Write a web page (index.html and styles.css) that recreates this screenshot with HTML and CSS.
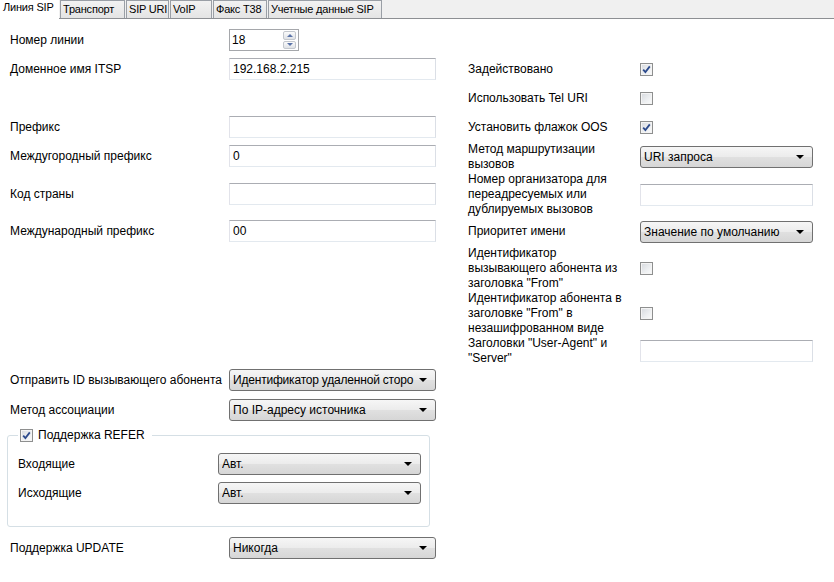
FILE: index.html
```html
<!DOCTYPE html>
<html lang="ru">
<head>
<meta charset="utf-8">
<title>Линия SIP</title>
<link rel="stylesheet" href="styles.css">
</head>
<body>
<div class="tabs">
  <div class="tab active">Линия SIP</div>
  <div class="tab t2">Транспорт</div>
  <div class="tab t3">SIP URI</div>
  <div class="tab t4">VoIP</div>
  <div class="tab t5">Факс T38</div>
  <div class="tab t6">Учетные данные SIP</div>
</div>
<div class="content">
  <div class="left">
    <div class="row">
      <span class="lbl">Номер линии</span>
      <div class="spin">
        <span class="val">18</span>
        <div class="spin-btns"><span class="sb up"></span><span class="sb down"></span></div>
      </div>
    </div>
    <div class="row m7">
      <span class="lbl">Доменное имя ITSP</span>
      <div class="inp">192.168.2.215</div>
    </div>
    <div class="row m36">
      <span class="lbl">Префикс</span>
      <div class="inp"></div>
    </div>
    <div class="row m7">
      <span class="lbl">Междугородный префикс</span>
      <div class="inp">0</div>
    </div>
    <div class="row m16">
      <span class="lbl">Код страны</span>
      <div class="inp"></div>
    </div>
    <div class="row m15">
      <span class="lbl">Международный префикс</span>
      <div class="inp">00</div>
    </div>
    <div class="row m127">
      <span class="lbl">Отправить ID вызывающего абонента</span>
      <div class="sel"><span class="txt tight">Идентификатор удаленной сторо</span><span class="arrow"></span></div>
    </div>
    <div class="row m8">
      <span class="lbl">Метод ассоциации</span>
      <div class="sel"><span class="txt">По IP-адресу источника</span><span class="arrow"></span></div>
    </div>
    <fieldset class="group">
      <legend class="legend"><span class="cb checked"><svg viewBox="0 0 11 11" width="11" height="11"><path d="M2.2 5.6 L4.4 8 L8.8 2.4" fill="none" stroke="#2c4a8c" stroke-width="1.8"/></svg></span><span>Поддержка REFER</span></legend>
      <div class="grow first">
        <span class="glbl">Входящие</span>
        <div class="sel gsel"><span class="txt">Авт.</span><span class="arrow"></span></div>
      </div>
      <div class="grow m7">
        <span class="glbl">Исходящие</span>
        <div class="sel gsel"><span class="txt">Авт.</span><span class="arrow"></span></div>
      </div>
    </fieldset>
    <div class="row m10">
      <span class="lbl">Поддержка UPDATE</span>
      <div class="sel"><span class="txt">Никогда</span><span class="arrow"></span></div>
    </div>
  </div>

  <div class="right">
    <div class="rrow h22">
      <span class="rlbl">Задействовано</span>
      <span class="cb checked"><svg viewBox="0 0 11 11" width="11" height="11"><path d="M2.2 5.6 L4.4 8 L8.8 2.4" fill="none" stroke="#2c4a8c" stroke-width="1.8"/></svg></span>
    </div>
    <div class="rrow h22 m7">
      <span class="rlbl">Использовать Tel URI</span>
      <span class="cb"></span>
    </div>
    <div class="rrow h22 m7">
      <span class="rlbl">Установить флажок OOS</span>
      <span class="cb checked"><svg viewBox="0 0 11 11" width="11" height="11"><path d="M2.2 5.6 L4.4 8 L8.8 2.4" fill="none" stroke="#2c4a8c" stroke-width="1.8"/></svg></span>
    </div>
    <div class="rrow h30 m4">
      <span class="rlbl">Метод маршрутизации<br>вызовов</span>
      <div class="sel rsel"><span class="txt">URI запроса</span><span class="arrow"></span></div>
    </div>
    <div class="rrow h45">
      <span class="rlbl">Номер организатора для<br>переадресуемых или<br>дублируемых вызовов</span>
      <div class="inp rinp"></div>
    </div>
    <div class="rrow h29">
      <span class="rlbl">Приоритет имени</span>
      <div class="sel rsel"><span class="txt">Значение по умолчанию</span><span class="arrow"></span></div>
    </div>
    <div class="rrow h45">
      <span class="rlbl">Идентификатор<br>вызывающего абонента из<br>заголовка "From"</span>
      <span class="cb"></span>
    </div>
    <div class="rrow h45">
      <span class="rlbl">Идентификатор абонента в<br>заголовке "From" в<br>незашифрованном виде</span>
      <span class="cb"></span>
    </div>
    <div class="rrow h30">
      <span class="rlbl">Заголовки "User-Agent" и<br>"Server"</span>
      <div class="inp rinp"></div>
    </div>
  </div>
</div>
</body>
</html>
```
FILE: styles.css
```css
* { box-sizing: border-box; }

html, body {
  margin: 0;
  padding: 0;
}

body {
  width: 834px;
  height: 582px;
  overflow: hidden;
  background: #ffffff;
  color: #000000;
  font-family: "Liberation Sans", Arial, sans-serif;
  font-size: 12px;
}

/* ---------- tabs ---------- */
.tabs {
  display: flex;
  align-items: flex-end;
  height: 19px;
  background: #f0f0f0;
  border-bottom: 1px solid #8d8f93;
}

.tab {
  height: 18px;
  line-height: 17px;
  padding: 0 2px;
  margin-left: 1px;
  border: 1px solid #9a9fa6;
  border-bottom: none;
  background: linear-gradient(#f2f2f2, #e4e4e4);
  font-size: 11px;
  letter-spacing: -0.2px;
  white-space: nowrap;
  overflow: hidden;
}

.tab.active {
  width: 59px;
  height: 19px;
  margin: 0 0 -1px 0;
  padding: 0 3px;
  line-height: 15px;
  border: none;
  background: #ffffff;
}

.tab.t2 { width: 65px; }
.tab.t3 { width: 43px; }
.tab.t4 { width: 42px; }
.tab.t5 { width: 54px; }
.tab.t6 { width: 114px; }

/* ---------- layout ---------- */
.content {
  display: flex;
  padding-top: 10px;
}

.left {
  flex: none;
  width: 468px;
  padding-left: 10px;
}

.right {
  flex: none;
  width: 360px;
  padding-top: 29px;
}

.row {
  display: flex;
  align-items: center;
  height: 22px;
}

.lbl {
  flex: none;
  width: 219px;
  white-space: nowrap;
}

.m4 { margin-top: 4px; }
.m7 { margin-top: 7px; }
.m8 { margin-top: 8px; }
.m10 { margin-top: 10px; }
.m15 { margin-top: 15px; }
.m16 { margin-top: 16px; }
.m36 { margin-top: 36px; }
.m127 { margin-top: 127px; }

/* ---------- controls ---------- */
.inp {
  flex: none;
  width: 207px;
  height: 22px;
  padding-left: 3px;
  line-height: 20px;
  border: 1px solid;
  border-color: #abadb3 #dbdfe6 #e3e9ef #e2e3ea;
  background: #ffffff;
  white-space: nowrap;
  overflow: hidden;
}

.spin {
  flex: none;
  display: flex;
  width: 70px;
  height: 22px;
  border: 1px solid #a5a7ab;
  background: #ffffff;
}

.spin .val {
  flex: 1;
  padding-left: 2px;
  line-height: 20px;
}

.spin-btns {
  display: flex;
  flex-direction: column;
  gap: 1px;
  width: 16px;
  padding: 1px 2px 1px 1px;
}

.sb {
  flex: 1;
  display: flex;
  align-items: center;
  justify-content: center;
  border: 1px solid #c3c7cd;
  border-radius: 2px;
  background: linear-gradient(#fbfbfb, #dfe2e6);
}

.sb.up::before {
  content: "";
  border-left: 3px solid transparent;
  border-right: 3px solid transparent;
  border-bottom: 3px solid #5a73a8;
}

.sb.down::before {
  content: "";
  border-left: 3px solid transparent;
  border-right: 3px solid transparent;
  border-top: 3px solid #5a73a8;
}

.sel {
  flex: none;
  display: flex;
  align-items: center;
  width: 207px;
  height: 22px;
  padding: 0 8px 0 3px;
  border: 1px solid #707070;
  border-radius: 3px;
  background: linear-gradient(#f6f6f6 0%, #ececec 48%, #e0e0e0 52%, #d6d6d6 100%);
  overflow: hidden;
}

.sel .txt {
  flex: 1;
  min-width: 0;
  white-space: nowrap;
  overflow: hidden;
}

.sel .txt.tight {
  letter-spacing: -0.2px;
}

.sel .arrow {
  flex: none;
  width: 0;
  height: 0;
  margin-left: 2px;
  border-left: 4px solid transparent;
  border-right: 4px solid transparent;
  border-top: 4px solid #000000;
}

.cb {
  flex: none;
  display: inline-flex;
  align-items: center;
  justify-content: center;
  width: 13px;
  height: 13px;
  border: 1px solid #8e8f8f;
  background: linear-gradient(135deg, #d6d9de 0%, #eef0f2 60%, #fbfbfb 100%);
  box-shadow: inset 0 0 0 1px #f4f4f4;
}

/* ---------- group box ---------- */
.group {
  margin: 7px 0 0 -3px;
  padding: 0 8px 21px 10px;
  width: 423px;
  height: 99px;
  border: 1px solid #d5dfe5;
  border-radius: 3px;
  min-width: 0;
}

.legend {
  display: flex;
  align-items: center;
  gap: 5px;
  height: 14px;
  line-height: 14px;
  padding: 0 7px 0 2px;
}

.grow {
  display: flex;
  align-items: center;
  height: 22px;
}

.grow.first {
  margin-top: 11px;
}

.glbl {
  flex: none;
  width: 200px;
  white-space: nowrap;
}

.gsel {
  width: 203px;
}

/* ---------- right column ---------- */
.rrow {
  display: flex;
  align-items: center;
}

.h22 { height: 22px; }
.h29 { height: 29px; }
.h30 { height: 30px; }
.h45 { height: 45px; }

.rlbl {
  flex: none;
  width: 172px;
  line-height: 15px;
  white-space: nowrap;
}

.rsel,
.rinp {
  width: 173px;
}
```
